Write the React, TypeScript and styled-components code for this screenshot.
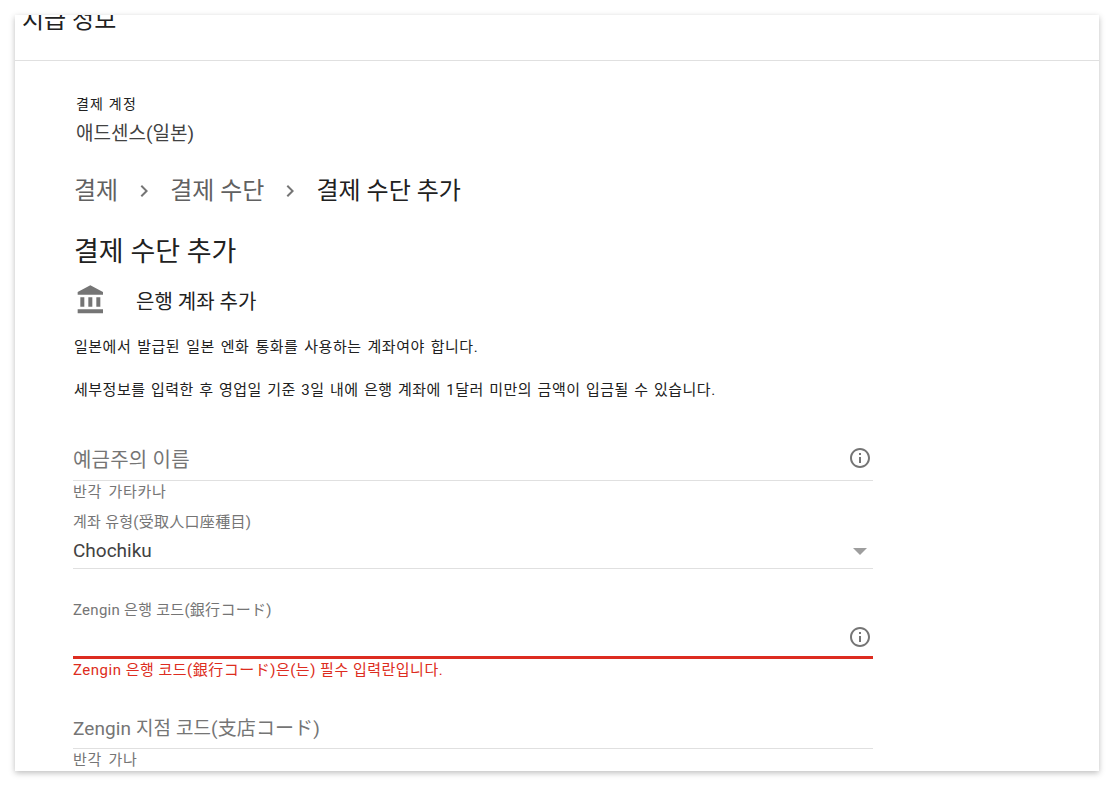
import React from 'react';
import styled, { createGlobalStyle } from 'styled-components';

const GlobalStyle = createGlobalStyle`
  html, body {
    margin: 0;
    height: 100%;
    background: #fff;
    font-family: Roboto, "Noto Sans CJK KR", sans-serif;
  }
`;

const InfoIcon: React.FC = () => (
  <svg width="24" height="24" viewBox="0 0 24 24" fill="#757575">
    <path d="M11 7h2v2h-2zm0 4h2v6h-2zm1-9C6.48 2 2 6.48 2 12s4.48 10 10 10 10-4.48 10-10S17.52 2 12 2zm0 18c-4.41 0-8-3.59-8-8s3.59-8 8-8 8 3.59 8 8-3.59 8-8 8z" />
  </svg>
);

const BankIcon: React.FC = () => (
  <svg width="32" height="32" viewBox="0 0 24 24" fill="#757575">
    <path d="M4 10v7h3v-7H4zm6 0v7h3v-7h-3zM2 22h19v-3H2v3zm14-12v7h3v-7h-3zM11.5 1 2 6v2h19V6l-9.5-5z" />
  </svg>
);

const ChevronIcon: React.FC = () => (
  <ChevronSvg width="24" height="24" viewBox="0 0 24 24" fill="#757575">
    <path d="M10 6 8.59 7.41 13.17 12l-4.58 4.59L10 18l6-6z" />
  </ChevronSvg>
);

const App: React.FC = () => (
  <Page>
    <GlobalStyle />
    <Card>
      <CardHeader>
        <CardTitle>지급 정보</CardTitle>
      </CardHeader>
      <CardBody>
        <AccountLabel>결제 계정</AccountLabel>
        <AccountName>애드센스(일본)</AccountName>
        <Breadcrumbs>
          <Crumb>결제</Crumb>
          <ChevronIcon />
          <Crumb>결제 수단</Crumb>
          <ChevronIcon />
          <Crumb $current>결제 수단 추가</Crumb>
        </Breadcrumbs>
        <PageTitle>결제 수단 추가</PageTitle>
        <MethodRow>
          <BankIcon />
          <MethodName>은행 계좌 추가</MethodName>
        </MethodRow>
        <Notice>일본에서 발급된 일본 엔화 통화를 사용하는 계좌여야 합니다.</Notice>
        <Notice>세부정보를 입력한 후 영업일 기준 3일 내에 은행 계좌에 1달러 미만의 금액이 입금될 수 있습니다.</Notice>
        <Form>
          <Field>
            <InputRow>
              <Placeholder>예금주의 이름</Placeholder>
              <InfoIcon />
            </InputRow>
            <Hint>반각 가타카나</Hint>
          </Field>
          <SelectField>
            <SmallLabel>계좌 유형(受取人口座種目)</SmallLabel>
            <SelectRow>
              <SelectValue>Chochiku</SelectValue>
              <Arrow />
            </SelectRow>
          </SelectField>
          <ErrorField>
            <SmallLabel>Zengin 은행 코드(銀行コード)</SmallLabel>
            <InputRow $error>
              <Placeholder />
              <InfoIcon />
            </InputRow>
            <ErrorText>Zengin 은행 코드(銀行コード)은(는) 필수 입력란입니다.</ErrorText>
          </ErrorField>
          <BranchField>
            <InputRow>
              <Placeholder $small>Zengin 지점 코드(支店コード)</Placeholder>
            </InputRow>
            <Hint>반각 가나</Hint>
          </BranchField>
        </Form>
      </CardBody>
    </Card>
  </Page>
);

const Page = styled('div')`
  box-sizing: border-box;
  height: 786px;
  padding: 15px;
  overflow: hidden;
`;

const Card = styled('div')`
  height: 756px;
  overflow: hidden;
  background: #fff;
  box-shadow: 0 2px 6px rgba(0, 0, 0, 0.26);
`;

const CardHeader = styled('div')`
  box-sizing: border-box;
  height: 46px;
  padding-left: 7px;
  border-bottom: 1px solid #e0e0e0;
  overflow: hidden;
`;

const CardTitle = styled('h1')`
  margin: -11px 0 0;
  font-size: 24px;
  line-height: 32px;
  font-weight: 400;
  color: #212121;
`;

const CardBody = styled('div')`
  padding: 33px 0 0 58px;
`;

const AccountLabel = styled('div')`
  margin-left: 3px;
  font-size: 14px;
  line-height: 20px;
  letter-spacing: 1.2px;
  color: #212121;
`;

const AccountName = styled('div')`
  margin: 8px 0 0 3px;
  font-size: 19px;
  line-height: 24px;
  color: #424242;
`;

const Breadcrumbs = styled('div')`
  display: flex;
  align-items: center;
  margin: 29px 0 0 1px;
  height: 32px;
`;

const Crumb = styled('span')<{ $current?: boolean }>`
  font-size: 24px;
  line-height: 32px;
  margin-right: 14px;
  color: ${(p) => (p.$current ? '#212121' : '#616161')};
`;

const ChevronSvg = styled('svg')`
  flex: none;
  margin-right: 14px;
`;

const PageTitle = styled('h2')`
  margin: 28px 0 0 1px;
  font-size: 27px;
  line-height: 34px;
  font-weight: 400;
  color: #212121;
`;

const MethodRow = styled('div')`
  display: flex;
  align-items: center;
  gap: 29px;
  margin: 13px 0 0 2px;
  height: 36px;
`;

const MethodName = styled('span')`
  font-size: 20px;
  color: #212121;
`;

const Notice = styled('p')`
  margin: 19px 0 0 1px;
  font-size: 15px;
  line-height: 20px;
  letter-spacing: 0.5px;
  word-spacing: 1.8px;
  color: #212121;
  & + & {
    margin-top: 23px;
    word-spacing: 1.2px;
  }
`;

const Form = styled('div')`
  width: 800px;
  margin: 39px 0 0;
`;

const Field = styled('div')``;

const InputRow = styled('div')<{ $error?: boolean }>`
  box-sizing: border-box;
  display: flex;
  align-items: center;
  justify-content: space-between;
  height: ${(p) => (p.$error ? '39px' : '42px')};
  padding: 0 1px 3px 0;
  border-bottom: ${(p) => (p.$error ? '3px solid #dd2c20' : '1px solid #e0e0e0')};
`;

const Placeholder = styled('span')<{ $small?: boolean }>`
  font-size: ${(p) => (p.$small ? '19px' : '20px')};
  letter-spacing: ${(p) => (p.$small ? '0.1px' : '0.2px')};
  color: #757575;
`;

const Hint = styled('div')`
  margin-top: 1px;
  font-size: 15px;
  line-height: 20px;
  letter-spacing: 0.7px;
  word-spacing: 2px;
  color: #757575;
`;

const SelectField = styled('div')`
  margin-top: 10px;
`;

const SmallLabel = styled('div')`
  font-size: 15px;
  line-height: 20px;
  letter-spacing: 0.28px;
  color: #757575;
`;

const SelectRow = styled('div')`
  box-sizing: border-box;
  display: flex;
  align-items: center;
  justify-content: space-between;
  height: 37px;
  padding-right: 6px;
  border-bottom: 1px solid #e0e0e0;
`;

const SelectValue = styled('span')`
  font-size: 19px;
  color: #424242;
`;

const Arrow = styled('span')`
  width: 0;
  height: 0;
  margin-top: 2px;
  border-left: 7px solid transparent;
  border-right: 7px solid transparent;
  border-top: 7px solid #9e9e9e;
`;

const ErrorField = styled('div')`
  margin-top: 31px;
`;

const ErrorText = styled('div')`
  margin-top: 1px;
  font-size: 15px;
  line-height: 20px;
  letter-spacing: 0.5px;
  color: #dd2c20;
`;

const BranchField = styled('div')`
  margin-top: 27px;
`;

export default App;
